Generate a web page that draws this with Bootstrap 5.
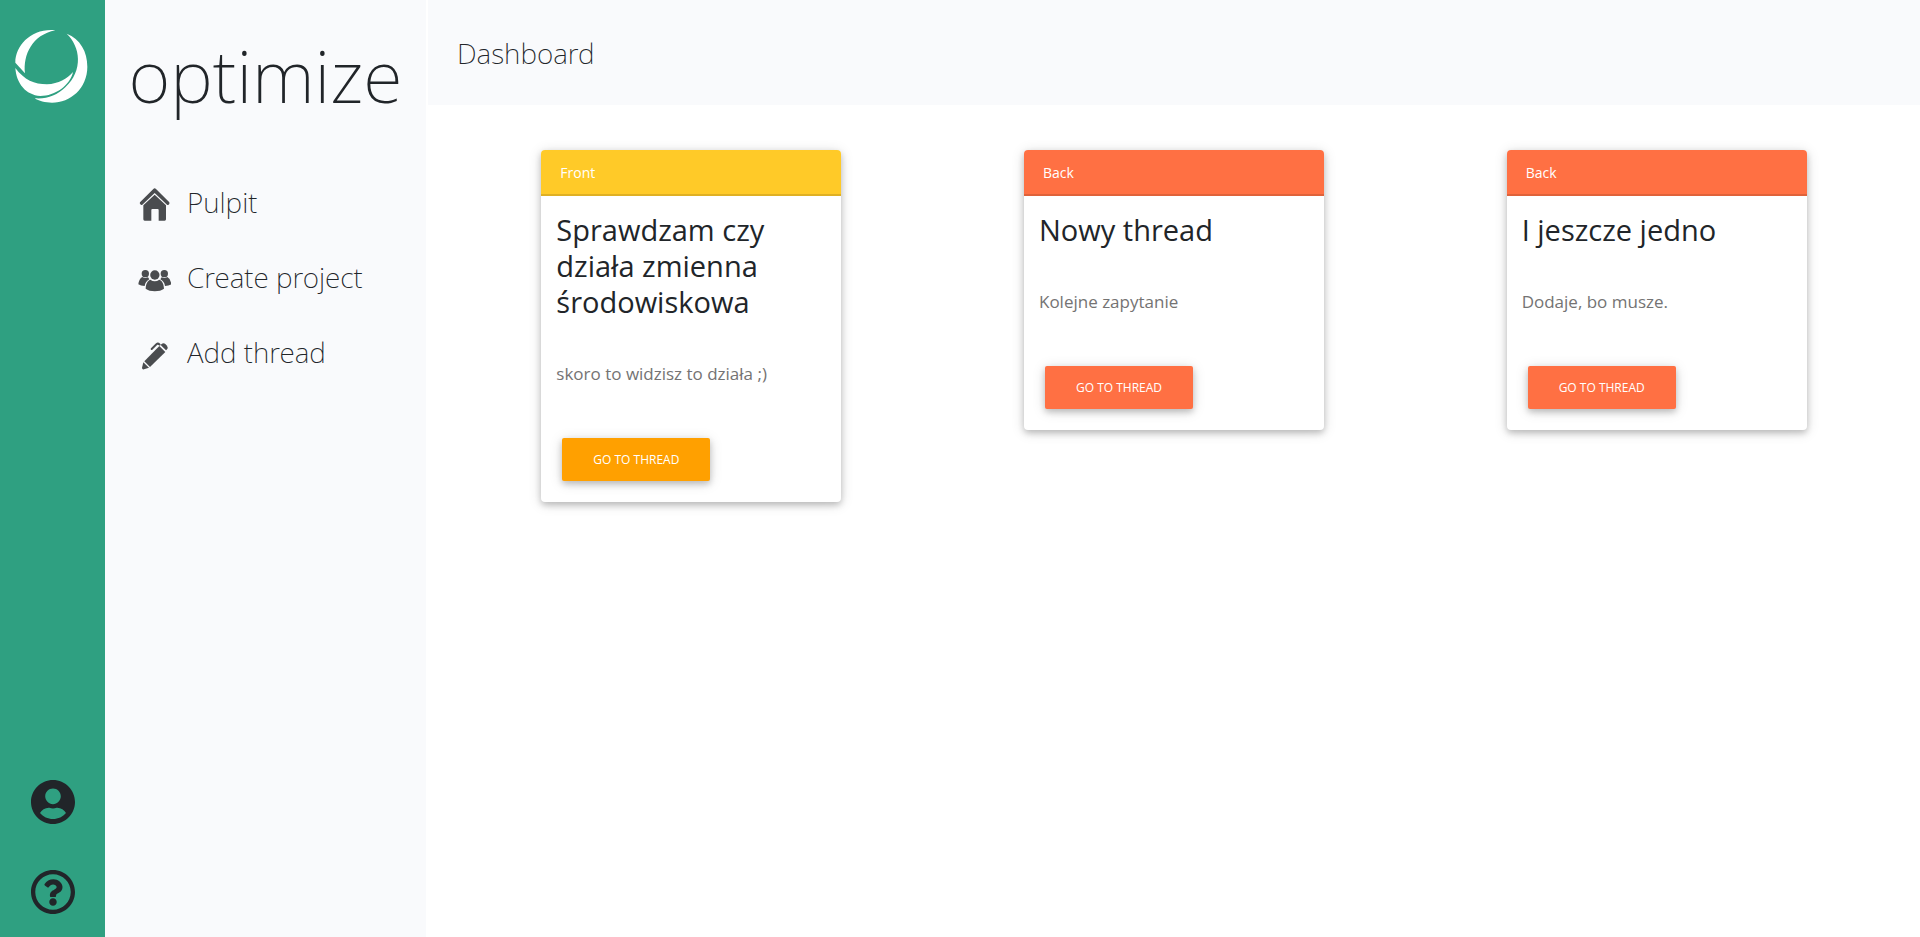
<!DOCTYPE html>
<html lang="pl">
<head>
<meta charset="utf-8">
<meta name="viewport" content="width=device-width, initial-scale=1">
<title>optimize – Dashboard</title>
<link href="https://cdn.jsdelivr.net/npm/bootstrap@5.3.0/dist/css/bootstrap.min.css" rel="stylesheet">
<style>
  body { font-family: "Open Sans", "Noto Sans", sans-serif; color: #212529; background: #fff; }
  .thin { font-family: "Noto Sans", "Open Sans", sans-serif; font-weight: 200; }
  .rail { width: 105px; background: #2fa081; }
  .rail a { color: #212529; }
  .rail-logo { padding-top: 28px; }
  .rail-icon { height: 90px; }
  .side { width: 321px; background: #f9fafc; padding-top: 32px; }
  .brand { font-size: 72px; line-height: 86px; margin-bottom: 46px; }
  .side-link { height: 75px; padding-left: 32px; gap: 16px; font-size: 28px; color: #212529; }
  .side-link svg { fill: #4a4c4f; }
  .content { margin-left: 2px; }
  .topbar { height: 105px; padding-left: 29px; background: #f9fafc; font-size: 28px; }
  .board { padding: 45px 22px; }
  .thread, .btn-thread { border: 0; box-shadow: 0 3px 6px rgba(0,0,0,.2), 0 2px 14px rgba(0,0,0,.14); }
  .thread { width: 300px; border-radius: 4px; }
  .thread .card-header { height: 46px; padding: 0 19px; font-size: 14px; color: #fff; border-bottom: 2px solid rgba(0,0,0,.125); }
  .thread .card-header:first-child { border-radius: 4px 4px 0 0; }
  .thread .card-body { padding: 16px 15px 21px; }
  .thread h2 { font-size: 29px; line-height: 36px; margin-bottom: 42px; font-weight: 400; }
  .thread p { font-size: 17px; line-height: 24px; margin-bottom: 52px; color: #747373; }
  .btn-thread { margin-left: 6px; padding: 0 31px; height: 43px; border-radius: 2px; font-size: 12px; color: #fff; }
  .front .card-header { background: #ffca28; }
  .front .btn-thread { background: #ffa000; }
  .back .card-header, .back .btn-thread { background: #ff7043; }
</style>
</head>
<body>
<div class="d-flex min-vh-100">
  <nav class="rail d-flex flex-column align-items-center flex-shrink-0" aria-label="Account">
    <a href="#" class="rail-logo" aria-label="optimize">
      <svg class="d-block" width="76" height="76" viewBox="44 84 228 228" fill="#fff">
        <path d="M165 91C95 84 45 135 45 188L74 220C68 165 95 105 165 91Z"/>
        <path d="M45 204C72 240 102 253 140 253C175 251 200 236 218 216C210 255 165 288 120 288C76 285 48 250 45 204Z"/>
        <path d="M199 101C240 117 261 155 261 200C261 265 210 308 155 308C135 308 115 303 103 295C140 298 170 286 195 262C250 210 240 140 199 101Z"/>
      </svg>
    </a>
    <a href="#" class="rail-icon d-flex align-items-center mt-auto" aria-label="Profile">
      <svg width="44" height="44" viewBox="0 8 496 496" fill="currentColor"><path d="M248 8C111 8 0 119 0 256s111 248 248 248 248-111 248-248S385 8 248 8zm0 96c48.6 0 88 39.4 88 88s-39.4 88-88 88-88-39.4-88-88 39.400-88 88-88zm0 344c-58.7 0-111.3-26.6-146.5-68.2 18.8-35.4 55.6-59.8 98.5-59.8 2.4 0 4.8.4 7.1 1.1 13 4.2 26.6 6.9 40.9 6.9 14.3 0 28-2.7 40.9-6.9 2.3-.7 4.7-1.1 7.1-1.1 42.9 0 79.7 24.4 98.5 59.8C359.3 421.4 306.7 448 248 448z"/></svg>
    </a>
    <a href="#" class="rail-icon d-flex align-items-center" aria-label="Help">
      <svg width="44" height="44" viewBox="8 8 496 496" fill="currentColor"><path d="M256 8C119.043 8 8 119.083 8 256c0 136.997 111.043 248 248 248s248-111.003 248-248C504 119.083 392.957 8 256 8zm0 448c-110.532 0-200-89.431-200-200 0-110.495 89.472-200 200-200 110.491 0 200 89.471 200 200 0 110.53-89.431 200-200 200zm107.244-255.2c0 67.052-72.421 68.084-72.421 92.863V300c0 6.627-5.373 12-12 12h-45.647c-6.627 0-12-5.373-12-12v-8.659c0-35.745 27.1-50.034 47.579-61.516 17.561-9.845 28.324-16.541 28.324-29.579 0-17.246-21.999-28.693-39.784-28.693-23.189 0-33.894 10.977-48.942 29.969-4.057 5.12-11.46 6.071-16.666 2.124l-27.824-21.098c-5.107-3.872-6.251-11.066-2.644-16.363C184.846 131.491 214.94 112 261.794 112c49.071 0 101.45 38.304 101.45 88.8zM298 368c0 23.159-18.841 42-42 42s-42-18.841-42-42 18.841-42 42-42 42 18.841 42 42z"/></svg>
    </a>
  </nav>
  <aside class="side flex-shrink-0">
    <div class="brand thin text-center">optimize</div>
    <nav aria-label="Main">
      <a href="#" class="side-link thin d-flex align-items-center text-decoration-none">
        <svg width="34" height="38" viewBox="9 -4 102 114"><path d="M58 14Q62 10 66 14L106 54Q108 59 103 62Q101 63 99 61L62 26L25 61Q22 63 19 60Q16 57 18 54Z"/><path d="M62 31L96 63V105Q96 109 92 109H74V77Q74 74 71 74H55Q52 74 52 77V109H32Q28 109 28 105V63Z"/></svg>
        <span>Pulpit</span>
      </a>
      <a href="#" class="side-link thin d-flex align-items-center text-decoration-none">
        <svg width="34" height="38" viewBox="9 -8 102 114"><circle cx="34" cy="39" r="11"/><circle cx="91" cy="39" r="11"/><circle cx="62.500" cy="43" r="14"/><path d="M49 57Q62 67 76 57C85 60 89 70 90 84C78 94 47 94 35 84C36 70 40 60 49 57Z"/><path d="M25 49Q33 55 42 50Q45 55 46 56Q34 62 32 76Q20 76 13 71Q15 54 25 49Z"/><path d="M100 49Q92 55 83 50Q80 55 79 56Q91 62 93 76Q105 76 112 71Q110 54 100 49Z"/></svg>
        <span>Create project</span>
      </a>
      <a href="#" class="side-link thin d-flex align-items-center text-decoration-none">
        <svg width="34" height="38" viewBox="9 -5 102 114"><path d="M76 34L94 52L48 97L31 80Z"/><path d="M28 83L45 99L30 104Q24 105 24 99Z"/><path d="M82 29Q88 23 94 28L99 33Q104 39 98 45L96 47L80 31Z"/><path d="M53 43L68 28Q72 25 77 30" fill="none" stroke="#4a4c4f" stroke-width="6" stroke-linecap="round"/></svg>
        <span>Add thread</span>
      </a>
    </nav>
  </aside>
  <div class="content flex-grow-1">
    <header class="topbar thin d-flex align-items-center">Dashboard</header>
    <main class="board">
      <div class="row g-0 align-items-start">
        <div class="col-4 d-flex justify-content-center">
          <article class="card thread front">
            <div class="card-header d-flex align-items-center">Front</div>
            <div class="card-body">
              <h2>Sprawdzam czy działa zmienna środowiskowa</h2>
              <p>skoro to widzisz to działa ;)</p>
              <button type="button" class="btn btn-thread d-block text-uppercase">Go to thread</button>
            </div>
          </article>
        </div>
        <div class="col-4 d-flex justify-content-center">
          <article class="card thread back">
            <div class="card-header d-flex align-items-center">Back</div>
            <div class="card-body">
              <h2>Nowy thread</h2>
              <p>Kolejne zapytanie</p>
              <button type="button" class="btn btn-thread d-block text-uppercase">Go to thread</button>
            </div>
          </article>
        </div>
        <div class="col-4 d-flex justify-content-center">
          <article class="card thread back">
            <div class="card-header d-flex align-items-center">Back</div>
            <div class="card-body">
              <h2>I jeszcze jedno</h2>
              <p>Dodaje, bo musze.</p>
              <button type="button" class="btn btn-thread d-block text-uppercase">Go to thread</button>
            </div>
          </article>
        </div>
      </div>
    </main>
  </div>
</div>
<script src="https://cdn.jsdelivr.net/npm/bootstrap@5.3.0/dist/js/bootstrap.bundle.min.js"></script>
</body>
</html>
